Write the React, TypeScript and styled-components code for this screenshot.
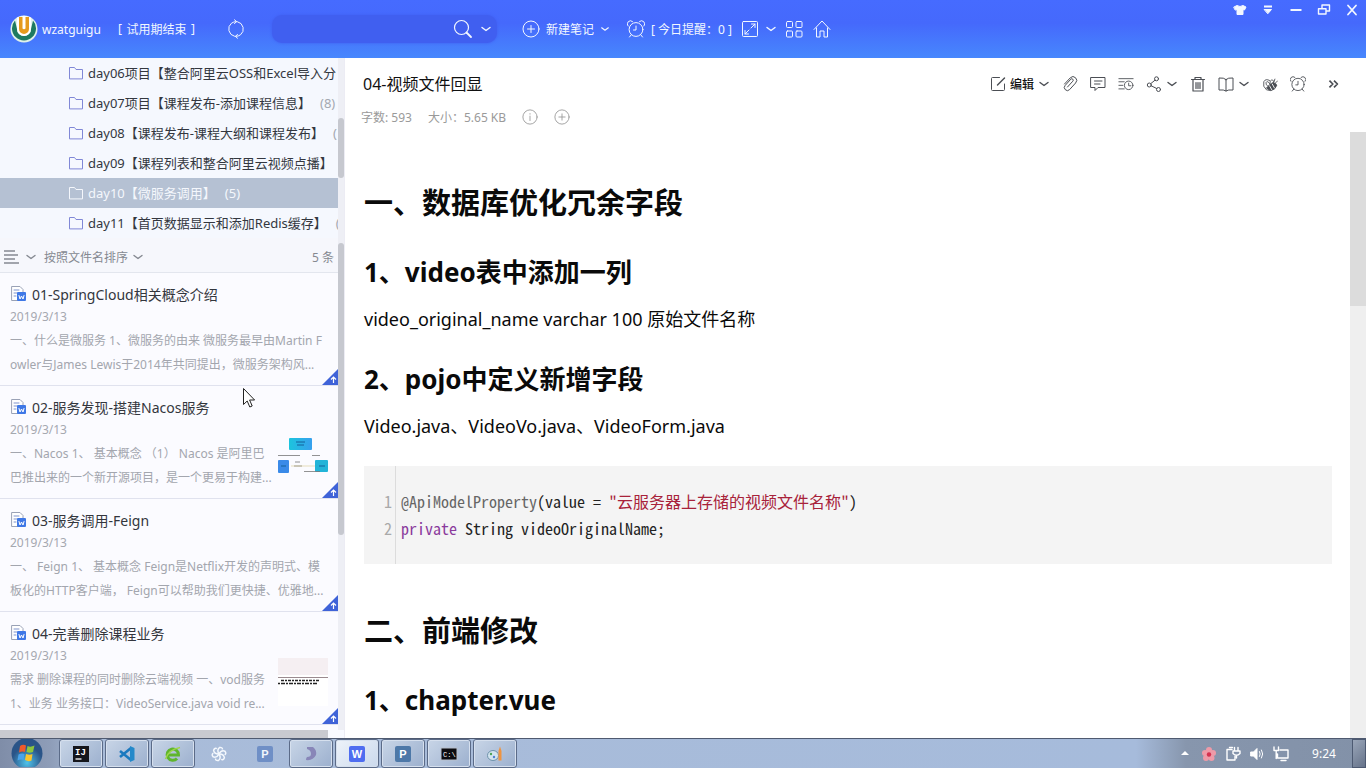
import React from 'react';
import styled, { createGlobalStyle, css } from 'styled-components';

const sans = `"Noto Sans", "Noto Sans CJK SC", sans-serif`;
const mono = `"Noto Sans Mono CJK SC", "Liberation Mono", "Noto Sans CJK SC", monospace`;

const GlobalStyle = createGlobalStyle`
  *, *::before, *::after { box-sizing: border-box; }
  html, body, #root { height: 100%; }
  body { margin: 0; font-family: ${sans}; font-size: 12px; color: #222; overflow: hidden; }
  button, input { font: inherit; color: inherit; }
  h1, h2, h3, p, ul { margin: 0; padding: 0; }
  ul { list-style: none; }
`;

const Page = styled.div`
  display: grid;
  grid-template-rows: 58px minmax(0, 1fr) 30px;
  height: 100vh;
  position: relative;
  background: #fff;
`;

/* ---------- icons ---------- */

const Svg = styled.svg<{ $w?: number }>`
  display: block;
  flex: none;
  fill: none;
  stroke: currentColor;
  stroke-width: ${(p) => p.$w ?? 1};
  stroke-linecap: round;
  stroke-linejoin: round;
`;

type IconProps = { size?: number; weight?: number };

const icon = (box: number, body: React.ReactNode) =>
  function Icon({ size = box, weight }: IconProps) {
    return (
      <Svg width={size} height={size} viewBox={`0 0 ${box} ${box}`} $w={weight} aria-hidden>
        {body}
      </Svg>
    );
  };

const ChevronIcon = icon(12, <path d="M2 4.500 6 7.500l4-3" strokeWidth="1.400" />);
const SyncIcon = icon(20, (
  <>
    <path d="M8.500 17.300A7.500 7.500 0 0 1 5.500 4.200Q7.500 2.600 10.500 2.600M11.500 2.700A7.500 7.500 0 0 1 14.500 15.800Q12.500 17.400 9.500 17.400" />
    <path d="m8.500.8 2.200 1.800-2.200 1.900M11.500 19.200l-2.200-1.800 2.200-1.900" />
  </>
));
const SearchIcon = icon(20, (
  <>
    <circle cx="8.500" cy="8.500" r="7" strokeWidth="1.200" />
    <path d="m13.500 13.500 4.500 4.500" strokeWidth="1.800" />
  </>
));
const PlusCircleIcon = icon(18, (
  <>
    <circle cx="9" cy="9" r="8" />
    <path d="M9 5.500v7M5.500 9h7" />
  </>
));
const InfoIcon = icon(18, (
  <>
    <circle cx="9" cy="9" r="8" />
    <path d="M9 8v5M9 5.200v.6" />
  </>
));
const AlarmIcon = icon(18, (
  <>
    <circle cx="9" cy="9.500" r="6.900" />
    <path d="M9 6v4H6.500M1 6A3.200 3.200 0 0 1 5.500 1.500M17 6a3.200 3.200 0 0 0-4.500-4.500M4.300 14.700 2.500 17M13.700 14.700 15.500 17" />
  </>
));
const ExpandIcon = icon(18, (
  <>
    <rect x="1.500" y="1.500" width="15" height="15" rx="1" />
    <path d="M10 8l4-4M10.500 4H14v3.500M8 10l-4 4M4 10.500V14h3.500" />
  </>
));
const GridIcon = icon(18, (
  <>
    <rect x="1.500" y="1.500" width="6" height="6" rx="1" />
    <rect x="11" y="1.500" width="6" height="6" rx="1" />
    <rect x="1.500" y="11" width="6" height="6" rx="1" />
    <rect x="11" y="11" width="6" height="6" rx="1" />
  </>
));
const HomeIcon = icon(18, <path d="M1 9.500 9 1l8 8.500M3.500 8v9H7v-6h4v6h3.500V8" />);
const ShirtIcon = icon(14, (
  <path d="M1 4 4 2.500q3 2 6 0L13 4l-1.500 3-1.500-.5V11.500H4V6.500L2.500 7Z" fill="currentColor" />
));
const DownMenuIcon = icon(14, (
  <>
    <path d="M3 3.500h8" strokeWidth="2" strokeLinecap="butt" />
    <path d="M3.500 6.500h7L7 10.500Z" fill="currentColor" />
  </>
));
const MinimizeIcon = icon(14, <path d="M1.500 7h11" strokeWidth="2" strokeLinecap="butt" />);
const RestoreIcon = icon(14, (
  <>
    <path d="M5 5V2h7.500v6H9.500" strokeWidth="1.400" />
    <path d="M1.500 5.700h7.500v5.300H1.500Z" strokeWidth="1.400" />
  </>
));
const CloseIcon = icon(14, <path d="m3 2.500 8 9M11 2.500l-8 9" strokeWidth="1.800" />);

const EditIcon = icon(16, (
  <>
    <path d="M9.500 1.500h-7a1 1 0 0 0-1 1v11a1 1 0 0 0 1 1h11a1 1 0 0 0 1-1V8" />
    <path d="m7.500 9 7-7" strokeWidth="1.400" />
  </>
));
const ClipIcon = icon(16, (
  <path d="M5.500 11 10.800 5.200a1.400 1.400 0 0 0-2-2L3.200 9.400a3 3 0 0 0 4.400 4.200l6-6.600a3.700 3.700 0 0 0-5.300-5.200L2.500 8" />
));
const CommentIcon = icon(16, (
  <path d="M1 1.500h14v10H8l-3 3v-3H1ZM4.500 5h7.500M4.500 8h5.500" />
));
const HistoryIcon = icon(18, (
  <>
    <path d="M1 3h16M1 6.500h6M1 10.500h4.500M1 14.500h6" />
    <circle cx="12" cy="10.500" r="4.800" />
    <path d="M12 8v3h2.500" />
  </>
));
const ShareIcon = icon(16, (
  <>
    <circle cx="3.300" cy="9" r="2" />
    <circle cx="10.500" cy="2.800" r="2" />
    <circle cx="12.500" cy="13.500" r="2" />
    <path d="M4.800 7.600 9 4.200M5.200 9.800l5.500 2.700" />
  </>
));
const TrashIcon = icon(16, (
  <path d="M1.500 3.500h13M5 3.500v-2h6v2M3 3.500v11.500h10V3.500M6 6.500v6M8 6.500v6M10 6.500v6" strokeWidth="1.200" />
));
const BookIcon = icon(16, (
  <path d="M8 3.500Q6 1.500 1 2v12Q6 13.500 8 15q2-1.500 7-1V2Q10 1.500 8 3.500ZM8 3.500V15" />
));
const BeeIcon = icon(18, (
  <>
    <path d="M8.500 5Q4 2.500 2 6.500.5 12 5 15.500q5 2.500 9-1" />
    <path d="M9 9Q6 4.500 4.500 7.500 4 10 6.500 11.500M9 8q0-4 3-3.500 1.500 1 1 3" />
    <path d="M5.500 13.500Q8 9 12 7.500q4 0 4.500 3Q15.500 15 10.500 16 7 16 5.500 13.500Z" fill="currentColor" />
    <path d="M8.500 11l2.500 4.500M11.500 9l2.500 4.500" stroke="#fff" />
    <path d="M13.500 6.500l1-3M15.500 7.500l2-2" />
  </>
));
const MoreIcon = icon(14, <path d="M3 4l3 3-3 3M7 4l3 3-3 3" strokeWidth="1.500" strokeLinecap="butt" />);

const FolderIcon = icon(16, (
  <path d="M1.500 13.500v-11h5l1.500 2h6.500v9Z" />
));
const ListIcon = icon(18, (
  <path d="M1 3h11M1 7h14M1 11h11M1 15h15" strokeWidth="1.700" strokeLinecap="butt" />
));

const NoteIcon = () => (
  <Svg width="18" height="18" viewBox="0 0 18 18" aria-hidden>
    <path d="M2 1.500h8l3 3v11H2Z" fill="#fff" stroke="#9aa2b6" />
    <path d="M4 5h5M4 8h3M4 11h2" stroke="#7f93cc" />
    <rect x="7" y="7" width="9" height="9" rx="1" fill="#3f78e6" stroke="none" />
    <path d="M9 10.500l1 3.500 1.500-3 1.500 3 1-3.500" stroke="#fff" />
  </Svg>
);

/* ---------- header ---------- */

const Header = styled.header`
  display: flex;
  align-items: center;
  padding: 0 0 0 10px;
  color: #f2f7ff;
  background: linear-gradient(#466bff, #4569fc 40%, #4787fd);
`;

const HeaderButton = styled.button<{ $ml?: number }>`
  display: flex;
  align-items: center;
  gap: 6px;
  height: 28px;
  margin: 0 0 0 ${(p) => p.$ml ?? 0}px;
  padding: 0;
  border: 0;
  background: none;
  white-space: nowrap;
`;

const UserName = styled.span`
  margin-left: 4px;
  font-size: 12px;
  width: 76px;
`;

const Trial = styled.a`
  width: 77px;
  display: flex;
  justify-content: space-between;
  color: inherit;
  text-decoration: none;
  white-space: nowrap;
`;

const SearchBox = styled.form`
  display: flex;
  align-items: center;
  gap: 7px;
  width: 225px;
  height: 28px;
  margin-left: 26px;
  padding-right: 5px;
  border-radius: 10px;
  background: #405ff0;
  box-shadow: 0 0 3px #405ff0;

  input {
    flex: 1;
    min-width: 0;
    border: 0;
    outline: 0;
    padding: 0 12px;
    background: none;
  }
`;

const WindowControls = styled.div`
  display: flex;
  align-self: flex-start;
  margin-left: auto;
`;

const WindowButton = styled.button`
  display: grid;
  place-items: center;
  width: 28px;
  height: 20px;
  padding: 0;
  border: 0;
  background: none;
`;

const Logo = () => (
  <svg width="28" height="28" viewBox="0 0 28 28" role="img" aria-label="wzatguigu">
    <circle cx="14" cy="14" r="13.500" fill="#dff1ea" />
    <path d="M5 5.500A12 12 0 1 0 23 5.500L21 14a7 7 0 0 1-14 0Z" fill="#1d7a61" />
    <path d="M7 2.500 14 .8l7 1.700V14a7 7 0 0 1-14 0Z" fill="#fff" />
    <path d="M9 2v12a5 5 0 0 0 10 0V2h-3.500v11.500q-1.500 1.500-3 0V2Z" fill="#e59b1d" />
  </svg>
);

/* ---------- sidebar ---------- */

const Body = styled.div`
  display: grid;
  grid-template-columns: 345px minmax(0, 1fr);
  min-height: 0;
`;

const Sidebar = styled.aside`
  display: flex;
  flex-direction: column;
  min-height: 0;
  overflow: hidden;
  background: #f8faff;
  border-right: 1px solid #ececf4;
`;

const Pane = styled.div<{ $grow?: boolean }>`
  display: grid;
  grid-template-columns: minmax(0, 1fr) 6px;
  min-height: 0;
  ${(p) => (p.$grow ? 'flex: 1; background: #fbfbff;' : 'flex: none; background: #f5f8fe;')}
`;

const Track = styled.div<{ $top: number; $size: number }>`
  padding-top: ${(p) => p.$top}px;
  background: #eeeff5;

  &::before {
    content: '';
    display: block;
    height: ${(p) => p.$size}px;
    border-radius: 3px;
    background: #c6c8cf;
  }
`;

const Tree = styled.ul`
  overflow: hidden;
`;

const TreeRow = styled.li<{ $active?: boolean }>`
  display: flex;
  align-items: center;
  height: 30px;
  padding: 0 0 1px 68px;
  font-size: 13px;
  white-space: nowrap;
  overflow: hidden;
  color: #33373f;
  ${(p) => p.$active && css`
    background: #b5c1d3;
    color: #f4f7fc;
  `}
`;

const FolderMark = styled.span<{ $active?: boolean }>`
  margin-right: 4px;
  color: ${(p) => (p.$active ? '#f4f7fc' : '#8088d6')};
`;

const Count = styled.span<{ $active?: boolean }>`
  margin-left: 9px;
  color: ${(p) => (p.$active ? '#f4f7fc' : '#a4a8b0')};
`;

const SortBar = styled.div`
  display: flex;
  flex: none;
  align-items: center;
  height: 35px;
  padding: 4px 4px 0 3px;
  gap: 4px;
  color: #858991;
  border-bottom: 1px solid #e3e6ee;
  background: #f6f7fc;
`;

const SortButton = styled.button`
  display: flex;
  align-items: center;
  gap: 4px;
  padding: 0;
  margin-right: 3px;
  border: 0;
  background: none;
`;

const Total = styled.span`
  margin-left: auto;
`;

const NoteList = styled.ul`
  overflow: hidden;
`;

const NoteItem = styled.li`
  position: relative;
  height: 113px;
  padding: 10px 10px 0;
  border-bottom: 1px solid #e0e2ee;
`;

const NoteTitle = styled.h3`
  display: flex;
  align-items: center;
  gap: 4px;
  height: 22px;
  padding-bottom: 1px;
  font-size: 14px;
  font-weight: 400;
  color: #33363d;
  white-space: nowrap;
`;

const NoteDate = styled.time`
  display: block;
  height: 24px;
  line-height: 24px;
  color: #a5a8b0;
`;

const NotePreview = styled.div`
  display: flex;
  justify-content: space-between;
  line-height: 24px;
  color: #a3a6ae;
  white-space: nowrap;

  span { display: block; }
`;

const Thumb = styled.svg`
  flex: none;
  width: 50px;
  height: 48px;
  margin-top: -10px;
`;

const SyncCorner = styled.svg`
  position: absolute;
  right: 0;
  bottom: 0;
`;

const BottomTrack = styled.div`
  flex: none;
  height: 8px;
  margin-right: 16px;
  background: #c9cad0;
`;

/* ---------- note ---------- */

const Note = styled.main`
  display: flex;
  flex-direction: column;
  min-width: 0;
  min-height: 0;
`;

const NoteBar = styled.div`
  display: flex;
  align-items: center;
  justify-content: space-between;
  height: 28px;
  margin-top: 12px;
  padding: 0 24px 0 18px;
`;

const DocTitle = styled.span`
  padding-bottom: 2px;
  font-size: 16px;
  color: #111;
  white-space: nowrap;
`;

const Tools = styled.div`
  display: flex;
  align-items: center;
  gap: 12px;
  color: #4b4e54;
`;

const Tool = styled.button<{ $ml?: number }>`
  display: flex;
  align-items: center;
  gap: 4px;
  margin: 0 0 0 ${(p) => p.$ml ?? 0}px;
  padding: 0;
  border: 0;
  background: none;
  white-space: nowrap;

  b { font-weight: 500; color: #111; }
`;

const Meta = styled.div`
  display: flex;
  align-items: center;
  height: 34px;
  padding: 3px 0 0 16px;
  gap: 16px;
  color: #9a9a9a;
`;

const Scroller = styled.div`
  display: grid;
  grid-template-columns: minmax(0, 1fr) 16px;
  flex: 1;
  min-height: 0;
`;

const PageTrack = styled.div`
  background: #efefef;

  &::before {
    content: '';
    display: block;
    height: 174px;
    background: #dcdcdc;
  }
`;

const Article = styled.article`
  overflow: hidden;
  padding: 49px 18px 0 19px;
  color: #0a0a0a;

  h1 { font-size: 29px; line-height: 44px; margin-bottom: 27px; }
  h2 { font-size: 26px; line-height: 40px; margin-bottom: 12px; }
  p { font-size: 18px; line-height: 30px; margin-bottom: 25px; }
`;

const Code = styled.pre`
  display: grid;
  grid-template-columns: 32px minmax(0, 1fr);
  margin: 0 0 45px;
  height: 98px;
  background: #f4f4f4;
  font: 16px/27px ${mono};
`;

const Gutter = styled.div`
  padding: 22px 3px 0 0;
  text-align: right;
  color: #a9a9a9;
  border-right: 1px solid #dcdcdc;
`;

const CodeLines = styled.code`
  font: inherit;
  padding: 22px 0 0 5px;
  color: #222;

  i { font-style: normal; color: #666; }
  em { font-style: normal; color: #a8223a; }
  b { font-weight: 400; color: #8a3a9c; }
`;

/* ---------- taskbar ---------- */

const Taskbar = styled.footer`
  display: flex;
  align-items: stretch;
  border-top: 1px solid #4f5a70;
  background: linear-gradient(90deg, #7f8da8, #8e9db8 50px, #a9bcd9 90px, #a6bbdb calc(100% - 230px), #8796ad calc(100% - 180px), #8291a8);
`;

const StartButton = styled.button`
  width: 59px;
  padding: 0 5px 0 0;
  border: 0;
  background: none;
`;

const Task = styled.button<{ $open?: boolean; $active?: boolean }>`
  display: grid;
  place-items: center;
  width: 44px;
  margin-right: 2px;
  padding: 0;
  border: 1px solid transparent;
  border-radius: 3px;
  background: none;
  ${(p) => p.$open && css`
    border-color: #5b6b88;
    box-shadow: inset 0 0 0 1px #d6e0ee;
    background: linear-gradient(135deg, #c8d5e7, #9cb0ce);
  `}
  ${(p) => p.$active && css`background: linear-gradient(135deg, #eef3fa, #cbd9ec);`}
`;

const Tray = styled.div`
  display: flex;
  align-items: center;
  gap: 8px;
  margin-left: auto;
  color: #fff;
`;

const TrayButton = styled.button`
  display: grid;
  place-items: center;
  width: 16px;
  padding: 0;
  border: 0;
  background: none;
`;

const Clock = styled.time`
  width: 40px;
  margin-left: 7px;
  text-align: center;
`;

const ShowDesktop = styled.button`
  align-self: stretch;
  width: 14px;
  padding: 0;
  border: 1px solid #4d5a72;
  background: linear-gradient(135deg, #9aa6b9, #66738a);
`;

const Pointer = styled.svg`
  position: absolute;
  left: 242px;
  top: 387px;
`;

/* ---------- data ---------- */

const folders: { name: string; count?: string; active?: boolean }[] = [
  { name: 'day06项目【整合阿里云OSS和Excel导入分' },
  { name: 'day07项目【课程发布-添加课程信息】', count: '(8)' },
  { name: 'day08【课程发布-课程大纲和课程发布】', count: '(' },
  { name: 'day09【课程列表和整合阿里云视频点播】' },
  { name: 'day10【微服务调用】', count: '(5)', active: true },
  { name: 'day11【首页数据显示和添加Redis缓存】', count: '(' },
];

const ServiceThumb = () => (
  <Thumb viewBox="0 0 50 48" aria-hidden>
    <defs>
      <linearGradient id="cyan"><stop offset="0" stopColor="#1cc4dd" /><stop offset="1" stopColor="#37a0ee" /></linearGradient>
    </defs>
    <rect x="11" y="6" width="23" height="12" rx="1" fill="url(#cyan)" />
    <rect x="0" y="28" width="11" height="13" rx="1" fill="#3a8ae8" />
    <rect x="37" y="28" width="13" height="12" rx="1" fill="#22b4d8" />
    <path d="M18 10h9M19 13h7M3 34h5M41 34h6" stroke="#15609a" />
    <path d="M0 23.500h22M34 23.500h8M17 30h5M16 34h8M26 39.500h16" stroke="#777" strokeWidth=".8" />
    <path d="M13 34h24" stroke="#d8c98e" strokeWidth=".6" />
  </Thumb>
);

const CodeThumb = () => (
  <Thumb viewBox="0 0 50 48" aria-hidden>
    <rect width="50" height="17" fill="#f5eff2" />
    <rect y="17" width="50" height="31" fill="#fff" />
    <path d="M0 19.500h50" stroke="#9a8a8e" />
    <path d="M3 22.500h38" stroke="#222" strokeWidth="1.500" strokeDasharray="3 1 2 1" />
    <path d="M0 25.500h40" stroke="#222" strokeWidth="1.500" strokeDasharray="2 1 4 1" />
  </Thumb>
);

const notes = [
  {
    title: '01-SpringCloud相关概念介绍',
    lines: ['一、什么是微服务 1、微服务的由来 微服务最早由Martin F', 'owler与James Lewis于2014年共同提出，微服务架构风...'],
  },
  {
    title: '02-服务发现-搭建Nacos服务',
    lines: ['一、Nacos 1、 基本概念 （1） Nacos 是阿里巴', '巴推出来的一个新开源项目，是一个更易于构建...'],
    thumb: <ServiceThumb />,
  },
  {
    title: '03-服务调用-Feign',
    lines: ['一、 Feign 1、 基本概念 Feign是Netflix开发的声明式、模', '板化的HTTP客户端， Feign可以帮助我们更快捷、优雅地...'],
  },
  {
    title: '04-完善删除课程业务',
    lines: ['需求 删除课程的同时删除云端视频 一、vod服务', '1、业务 业务接口：VideoService.java void re...'],
    thumb: <CodeThumb />,
  },
];

const TaskGlyph = ({ bg, fg, label }: { bg: string; fg: string; label: string }) => (
  <svg width="18" height="18" viewBox="0 0 18 18" aria-hidden>
    <rect x="1" y="1" width="16" height="16" rx="2" fill={bg} />
    <text x="9" y="13" textAnchor="middle" fontSize="11" fontWeight="700" fontFamily="Liberation Sans, sans-serif" fill={fg}>{label}</text>
  </svg>
);

const tasks: { name: string; open?: boolean; active?: boolean; glyph: React.ReactNode }[] = [
  {
    name: 'IntelliJ IDEA', open: true,
    glyph: (
      <svg width="18" height="18" viewBox="0 0 18 18" aria-hidden>
        <rect x="1" y="1" width="16" height="16" fill="#15161c" />
        <text x="3" y="10" fontSize="9" fontWeight="700" fontFamily="Liberation Mono, monospace" fill="#fff">IJ</text>
        <path d="M3.500 14h6" stroke="#fff" strokeWidth="1.300" />
      </svg>
    ),
  },
  {
    name: 'Visual Studio Code', open: true,
    glyph: (
      <svg width="18" height="18" viewBox="0 0 18 18" aria-hidden>
        <path d="M2 6 13 15M2 12 13 3" stroke="#1b79bf" strokeWidth="2.600" />
        <path d="m12 1 4.500 2v12L12 17Z" fill="#2489ca" />
      </svg>
    ),
  },
  {
    name: 'Browser', open: true,
    glyph: (
      <svg width="18" height="18" viewBox="0 0 18 18" aria-hidden>
        <path d="M4.500 10h10A5.700 5.700 0 1 0 13 13.500" fill="none" stroke="#5fb52c" strokeWidth="3" />
        <path d="M1.500 14Q4 5 16 2.500" fill="none" stroke="#9ed64a" strokeWidth="1.400" />
      </svg>
    ),
  },
  {
    name: 'Pinwheel',
    glyph: (
      <svg width="18" height="18" viewBox="0 0 18 18" aria-hidden>
        <g fill="none" stroke="#f4f8fd" strokeWidth="1.500">
          {[0, 60, 120, 180, 240, 300].map((a) => (
            <path key={a} d="M9 9Q6.500 5 9.500 2.500q3-.5 3 2" transform={`rotate(${a} 9 9)`} />
          ))}
        </g>
      </svg>
    ),
  },
  { name: 'Power tool', glyph: <TaskGlyph bg="#6f8fc6" fg="#f2f6fc" label="P" /> },
  {
    name: 'Navigator', open: true,
    glyph: (
      <svg width="18" height="18" viewBox="0 0 18 18" aria-hidden>
        <path d="M5 2h6q4 3 3 8-3 6-10 5 0-2 1-3 4 0 4-3Q9 5 5 4Z" fill="#8886b8" />
      </svg>
    ),
  },
  { name: 'WizNote', open: true, active: true, glyph: <TaskGlyph bg="#4f6df0" fg="#fff" label="W" /> },
  { name: 'Presenter', open: true, glyph: <TaskGlyph bg="#4d78a8" fg="#fff" label="P" /> },
  {
    name: 'Command prompt', open: true,
    glyph: (
      <svg width="18" height="18" viewBox="0 0 18 18" aria-hidden>
        <rect x="1" y="3" width="16" height="12" fill="#0c0c10" stroke="#b7bfcc" />
        <text x="3" y="12" fontSize="7" fontFamily="Liberation Mono, monospace" fill="#fff">C:\</text>
      </svg>
    ),
  },
  {
    name: 'Paint', open: true,
    glyph: (
      <svg width="18" height="18" viewBox="0 0 18 18" aria-hidden>
        <ellipse cx="7" cy="10.500" rx="5.500" ry="5" fill="#d3e3ee" stroke="#6e93ab" />
        <circle cx="5" cy="9" r="1.200" fill="#4ba35a" /><circle cx="8" cy="12" r="1.200" fill="#4c7fd0" />
        <path d="M12.500 15.500V6L14 1.500 15.500 6v9.500Z" fill="#ef9440" />
      </svg>
    ),
  },
];

/* ---------- page ---------- */

export default function App() {
  return (
    <Page>
      <GlobalStyle />
      <Header>
        <Logo />
        <UserName>wzatguigu</UserName>
        <Trial href="#trial"><span>[</span><span>试用期结束</span><span>]</span></Trial>
        <HeaderButton $ml={31} aria-label="同步"><SyncIcon /></HeaderButton>
        <SearchBox role="search" onSubmit={(e) => e.preventDefault()}>
          <input type="text" aria-label="搜索" />
          <HeaderButton aria-label="搜索笔记"><SearchIcon /></HeaderButton>
          <HeaderButton type="button" aria-label="搜索选项"><ChevronIcon /></HeaderButton>
        </SearchBox>
        <HeaderButton $ml={25}><PlusCircleIcon />新建笔记<ChevronIcon size={10} /></HeaderButton>
        <HeaderButton $ml={17}><AlarmIcon />[ 今日提醒：0 ]</HeaderButton>
        <HeaderButton $ml={9} aria-label="全屏"><ExpandIcon /><ChevronIcon /></HeaderButton>
        <HeaderButton $ml={8} aria-label="应用"><GridIcon /></HeaderButton>
        <HeaderButton $ml={10} aria-label="主页"><HomeIcon /></HeaderButton>
        <WindowControls>
          <WindowButton aria-label="皮肤"><ShirtIcon /></WindowButton>
          <WindowButton aria-label="菜单"><DownMenuIcon /></WindowButton>
          <WindowButton aria-label="最小化"><MinimizeIcon /></WindowButton>
          <WindowButton aria-label="还原"><RestoreIcon /></WindowButton>
          <WindowButton aria-label="关闭"><CloseIcon /></WindowButton>
        </WindowControls>
      </Header>

      <Body>
        <Sidebar>
          <Pane>
            <Tree>
              {folders.map((f) => (
                <TreeRow key={f.name} $active={f.active}>
                  <FolderMark $active={f.active}><FolderIcon /></FolderMark>
                  {f.name}
                  {f.count && <Count $active={f.active}>{f.count}</Count>}
                </TreeRow>
              ))}
            </Tree>
            <Track $top={60} $size={60} />
          </Pane>
          <Pane $grow>
            <div>
              <SortBar>
                <SortButton aria-label="视图"><ListIcon /><ChevronIcon /></SortButton>
                <SortButton>按照文件名排序<ChevronIcon /></SortButton>
                <Total>5 条</Total>
              </SortBar>
              <NoteList>
                {notes.map((n) => (
                  <NoteItem key={n.title}>
                    <NoteTitle><NoteIcon />{n.title}</NoteTitle>
                    <NoteDate>2019/3/13</NoteDate>
                    <NotePreview>
                      <div>{n.lines.map((l) => <span key={l}>{l}</span>)}</div>
                      {n.thumb}
                    </NotePreview>
                    <SyncCorner width="16" height="16" viewBox="0 0 16 16" aria-hidden>
                      <path d="M16 0v16H0Z" fill="#3f63d8" />
                      <path d="M11.500 14V8M9 10.500 11.500 8l2.500 2.500" fill="none" stroke="#fff" strokeWidth="1.200" />
                    </SyncCorner>
                  </NoteItem>
                ))}
              </NoteList>
            </div>
            <Track $top={5} $size={292} />
          </Pane>
          <BottomTrack />
        </Sidebar>

        <Note>
          <NoteBar>
            <DocTitle>04-视频文件回显</DocTitle>
            <Tools>
              <Tool><EditIcon /><b>编辑</b><ChevronIcon /></Tool>
              <Tool aria-label="附件"><ClipIcon /></Tool>
              <Tool aria-label="评论"><CommentIcon /></Tool>
              <Tool aria-label="历史"><HistoryIcon size={16} /></Tool>
              <Tool aria-label="分享"><ShareIcon /><ChevronIcon /></Tool>
              <Tool aria-label="删除"><TrashIcon /></Tool>
              <Tool aria-label="阅读"><BookIcon /><ChevronIcon /></Tool>
              <Tool aria-label="插件"><BeeIcon size={16} /></Tool>
              <Tool aria-label="提醒"><AlarmIcon size={16} /></Tool>
              <Tool $ml={8} aria-label="更多"><MoreIcon size={16} /></Tool>
            </Tools>
          </NoteBar>
          <Meta>
            <span>字数: 593</span>
            <span>大小：5.65 KB</span>
            <Tool aria-label="信息"><InfoIcon size={16} /></Tool>
            <Tool aria-label="添加"><PlusCircleIcon size={16} /></Tool>
          </Meta>
          <Scroller>
            <Article>
              <h1>一、数据库优化冗余字段</h1>
              <h2>1、video表中添加一列</h2>
              <p>video_original_name varchar 100 原始文件名称</p>
              <h2>2、pojo中定义新增字段</h2>
              <p>Video.java、VideoVo.java、VideoForm.java</p>
              <Code>
                <Gutter>{'1\n2'}</Gutter>
                <CodeLines>
                  <i>@ApiModelProperty</i>(value = <em>"云服务器上存储的视频文件名称"</em>){'\n'}
                  <b>private</b> String videoOriginalName;
                </CodeLines>
              </Code>
              <h1>二、前端修改</h1>
              <h2>1、chapter.vue</h2>
            </Article>
            <PageTrack />
          </Scroller>
        </Note>
      </Body>

      <Taskbar>
        <StartButton aria-label="开始">
          <svg width="34" height="28" viewBox="0 0 34 28" aria-hidden>
            <defs>
              <radialGradient id="orb" cx=".5" cy=".8"><stop offset="0" stopColor="#4fc3ea" /><stop offset="1" stopColor="#2a5488" /></radialGradient>
            </defs>
            <circle cx="17" cy="14.500" r="15.500" fill="url(#orb)" />
            <path d="M10 7q3-2 6-.5L15 13q-3-1-6 .500Z" fill="#ee5a2b" />
            <path d="M17.500 7q3 1.500 7-.5L23 13q-3 1.500-6.500 0Z" fill="#8cc63f" />
            <path d="M8.500 15.500q3-1.500 6-.5L13.500 21q-3-1-6 .5Z" fill="#4aa3ea" />
            <path d="M16 15q3.500 1.500 6.500 0L21.500 21.500q-3 1.500-6.500-.5Z" fill="#fbc52c" />
          </svg>
        </StartButton>
        {tasks.map((t) => (
          <Task key={t.name} aria-label={t.name} $open={t.open} $active={t.active}>{t.glyph}</Task>
        ))}
        <Tray>
          <TrayButton aria-label="显示隐藏图标">
            <svg width="8" height="5" viewBox="0 0 8 5" aria-hidden><path d="M4 0l4 4H0Z" fill="#fff" /></svg>
          </TrayButton>
          <TrayButton aria-label="云朵">
            <svg width="16" height="16" viewBox="0 0 16 16" aria-hidden>
              <g fill="#ee9aa8"><circle cx="8" cy="4" r="3" /><circle cx="12" cy="7" r="3" /><circle cx="10.500" cy="12" r="3" /><circle cx="5" cy="12" r="3" /><circle cx="4" cy="7" r="3" /></g>
              <circle cx="8" cy="8.500" r="2.200" fill="#d5304e" />
            </svg>
          </TrayButton>
          <TrayButton aria-label="电源">
            <Svg width="16" height="16" viewBox="0 0 16 16" $w={1.4}>
              <path d="M7 3.500H2V14h8v-3.500M4.500 1.500h3M9.500 1.500V5M13 1.500V5M8 5h7v2.500q-3.500 3.500-7 0ZM11.500 9.500V12" />
            </Svg>
          </TrayButton>
          <TrayButton aria-label="音量">
            <Svg width="16" height="16" viewBox="0 0 16 16">
              <path d="M2 6h2.500L8 2.500v11L4.500 10H2Z" fill="currentColor" /><path d="M10.500 5.500q1.500 2.500 0 5M12.500 4q2.500 4 0 8" />
            </Svg>
          </TrayButton>
          <TrayButton aria-label="网络">
            <Svg width="16" height="16" viewBox="0 0 16 16" $w={1.4}>
              <path d="M7 4h8v8H4.500V8M8 14.500h5M1 1v3.500h4.500V1M3.200 4.500v8" />
            </Svg>
          </TrayButton>
          <Clock>9:24</Clock>
          <ShowDesktop aria-label="显示桌面" />
        </Tray>
      </Taskbar>

      <Pointer width="14" height="22" viewBox="0 0 14 22" aria-hidden>
        <path d="M1.500 1.500v16l3.700-3.500 2.600 6 2.400-1-2.600-6h5Z" fill="#fff" stroke="#222" />
      </Pointer>
    </Page>
  );
}
